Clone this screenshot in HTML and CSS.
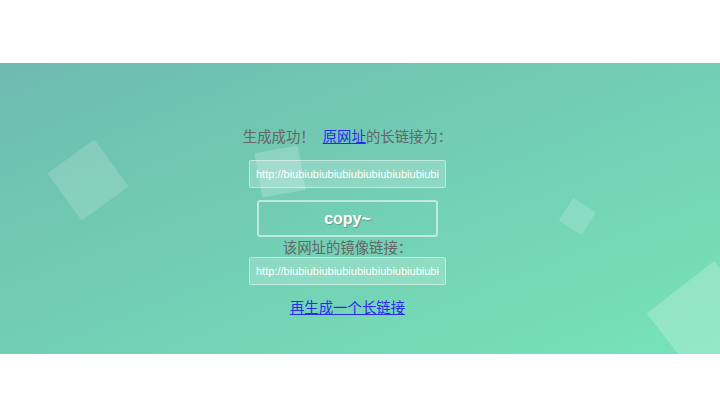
FILE: index.html
```html
<!DOCTYPE html>
<html lang="zh-CN">
<head>
<meta charset="utf-8">
<title>生成成功</title>
<link rel="stylesheet" href="styles.css">
</head>
<body>
<section class="band">
  <div class="bubble b1"></div>
  <div class="bubble b2"></div>
  <div class="bubble b3"></div>
  <div class="bubble b4"></div>
  <div class="panel">
    <p class="label first">生成成功！&nbsp; <a href="#" class="link">原网址</a>的长链接为：</p>
    <input class="url" type="text" readonly value="http://biubiubiubiubiubiubiubiubiubiubiubiubiubiubiubiubiu">
    <button class="copy" type="button">copy~</button>
    <p class="label second">该网址的镜像链接：</p>
    <input class="url" type="text" readonly value="http://biubiubiubiubiubiubiubiubiubiubiubiubiubiubiubiubiu">
    <a href="#" class="link again">再生成一个长链接</a>
  </div>
</section>
</body>
</html>
```

FILE: styles.css
```css
html, body {
  margin: 0;
  padding: 0;
  background: #ffffff;
  font-family: "Liberation Sans", "Noto Sans CJK SC", sans-serif;
}

.band {
  position: relative;
  overflow: hidden;
  margin-top: 63px;
  height: 291px;
  background: linear-gradient(to bottom right, #6ebbb0 0%, #77e3b8 100%);
}

.bubble {
  position: absolute;
  background: rgba(255, 255, 255, 0.16);
}

.b1 { left: 59px; top: 88px; width: 58px; height: 58px; transform: rotate(-36deg); }
.b2 { left: 258px; top: 86px; width: 44px; height: 45px; transform: rotate(-10deg); background: rgba(255, 255, 255, 0.2); }
.b3 { left: 564px; top: 140px; width: 27px; height: 27px; transform: rotate(32deg); }
.b4 { left: 664px; top: 215px; width: 86px; height: 86px; transform: rotate(-38deg); background: rgba(255, 255, 255, 0.22); }

.panel {
  position: relative;
  display: flex;
  flex-direction: column;
  align-items: center;
  padding-top: 64px;
  padding-right: 25px;
}

.label {
  margin: 0;
  font-size: 14.4px;
  line-height: 20px;
  color: #666666;
}

.label.second {
  margin-top: 2px;
  line-height: 18px;
}

.link {
  color: #2b2bf0;
  text-decoration: underline;
}

.url {
  box-sizing: border-box;
  width: 197px;
  height: 28px;
  margin: 13px 0 0;
  padding: 0 6px;
  border: 1px solid rgba(255, 255, 255, 0.45);
  border-radius: 2px;
  background: rgba(255, 255, 255, 0.2);
  color: #ffffff;
  font-family: "Liberation Sans", sans-serif;
  font-size: 11px;
  outline: none;
}

.label.second + .url {
  margin-top: 0;
}

.copy {
  box-sizing: border-box;
  width: 181px;
  height: 37px;
  margin-top: 12px;
  border: 2px solid rgba(255, 255, 255, 0.55);
  border-radius: 3px;
  background: transparent;
  color: #ffffff;
  font-family: "Liberation Sans", sans-serif;
  font-size: 16px;
  font-weight: bold;
  text-shadow: 1px 1px 1px rgba(0, 0, 0, 0.25);
}

.again {
  margin-top: 13px;
  font-size: 14.4px;
  line-height: 20px;
}
```
